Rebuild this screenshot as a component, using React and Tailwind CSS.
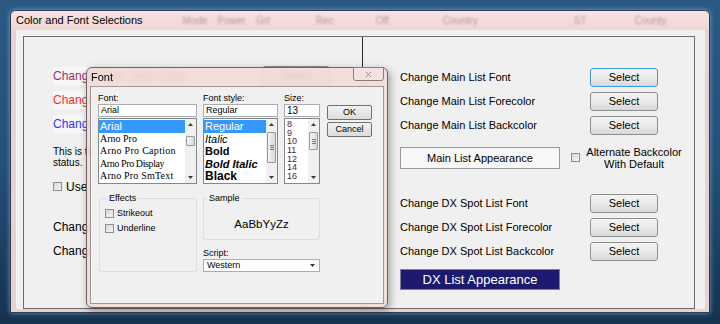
import { X } from 'lucide-react'

function Btn({ children, focus }) {
  return (
    <div
      className={`flex h-[19px] w-[68px] shrink-0 items-center justify-center rounded-[3px] border bg-linear-to-b from-[#f4f4f4] via-[#ebebeb] to-[#d8d8d8] text-[11px] text-black ${
        focus ? 'border-[#3c9ad8]' : 'border-[#8e8f8f]'
      }`}
    >
      {children}
    </div>
  )
}

function Check() {
  return <span className="inline-block h-[9px] w-[9px] shrink-0 border border-[#8f8f8f] bg-linear-to-br from-[#d6d6d6] to-[#f6f6f6]" />
}

function Arrow({ down }) {
  return (
    <svg width="5" height="3" viewBox="0 0 5 3">
      <path d={down ? 'M0 0L2.5 3L5 0z' : 'M0 3L2.5 0L5 3z'} fill="#3a3a3a" />
    </svg>
  )
}

function Scroll({ thumb, grip }) {
  return (
    <div className="flex w-[11px] shrink-0 flex-col bg-[#f0f0f0]">
      <div className="flex h-[11px] items-center justify-center">
        <Arrow />
      </div>
      <div className="flex-1">
        <div className={`mx-[1px] flex flex-col items-center justify-center gap-[1px] rounded-[1px] border border-[#9a9a9a] bg-linear-to-r from-[#f3f3f3] to-[#d9d9d9] ${thumb}`}>
          {grip && (
            <>
              <span className="h-px w-[4px] bg-[#777]" />
              <span className="h-px w-[4px] bg-[#777]" />
              <span className="h-px w-[4px] bg-[#777]" />
            </>
          )}
        </div>
      </div>
      <div className="flex h-[11px] items-center justify-center">
        <Arrow down />
      </div>
    </div>
  )
}

const fonts = [
  { name: 'Arial', cls: "font-['Liberation_Sans',sans-serif] text-[11px]" },
  { name: 'Arno Pro', cls: "font-['Liberation_Serif',serif] text-[10px]" },
  { name: 'Arno Pro Caption', cls: "font-['Liberation_Serif',serif] text-[10px] tracking-[0.3px]" },
  { name: 'Arno Pro Display', cls: "font-['Liberation_Serif',serif] text-[10px] tracking-[-0.4px]" },
  { name: 'Arno Pro SmText', cls: "font-['Liberation_Serif',serif] text-[10px] tracking-[0.2px]" },
]

const styles = [
  { name: 'Regular', cls: 'text-[11px]' },
  { name: 'Italic', cls: 'text-[11px] italic' },
  { name: 'Bold', cls: 'text-[11px] font-bold' },
  { name: 'Bold Italic', cls: 'text-[11px] font-bold italic' },
  { name: 'Black', cls: 'text-[12px] font-bold' },
]

const sizes = ['8', '9', '10', '11', '12', '14', '16']

const leftRows = [
  { label: 'Change Form Sent Color', color: 'text-[#9b2c6c]' },
  { label: 'Change Spot Worked Color', color: 'text-[#ff2626]' },
  { label: 'Change Spot Needed Color', color: 'text-[#3030ff]' },
]

const ghosts = [
  ['Mode', 'ml-[40px]'],
  ['Power', 'ml-[10px]'],
  ['Grt', 'ml-[10px]'],
  ['Rec', 'ml-[46px]'],
  ['Off', 'ml-[42px]'],
  ['Country', 'ml-[54px]'],
  ['ST', 'ml-[96px]'],
  ['County', 'ml-[48px]'],
]

function FontDialog() {
  return (
    <div className="absolute left-[86px] top-[67px] flex h-[241px] w-[302px] flex-col rounded-[6px] border border-[#6f6262] bg-[#f1dad7]/90 shadow-[2px_3px_8px_rgba(0,0,0,0.35)] backdrop-blur-[2px]">
      <div className="relative flex h-[18px] shrink-0 items-center pl-[4px] text-[11px] text-black">
        Font
        <div className="absolute right-[3px] top-[-1px] flex h-[14px] w-[31px] items-center justify-center rounded-b-[3px] border border-[#8c7c7c] bg-[#f4e4e2]/70">
          <X size={9} strokeWidth={2.5} className="text-[#8a8a8a]" />
        </div>
      </div>
      <div className="mx-[3px] mb-[3px] flex-1 border border-[#a59494] bg-[#f0f0f0] pl-[7px] pt-[6px] text-[9px] text-black">
        <div className="flex">
          <div className="flex w-[99px] flex-col">
            <div className="h-[11px] leading-[11px]">Font:</div>
            <div className="h-[13px] border border-[#abadb3] bg-white px-[2px] leading-[11px]">Arial</div>
            <div className="mt-[1px] flex h-[66px] border border-[#828790] bg-white">
              <div className="flex-1 overflow-hidden pt-[1px]">
                {fonts.map((f, i) => (
                  <div
                    key={f.name}
                    className={`h-[12.5px] truncate px-[1px] leading-[12.5px] ${f.cls} ${i === 0 ? 'bg-[#3399ff] text-white' : 'text-black'}`}
                  >
                    {f.name}
                  </div>
                ))}
              </div>
              <Scroll thumb="mt-[6px] h-[10px]" />
            </div>
          </div>
          <div className="ml-[6px] flex w-[75px] flex-col">
            <div className="h-[11px] leading-[11px]">Font style:</div>
            <div className="h-[13px] border border-[#abadb3] bg-white px-[2px] leading-[11px]">Regular</div>
            <div className="mt-[1px] flex h-[66px] border border-[#828790] bg-white">
              <div className="flex-1 overflow-hidden pt-[1px]">
                {styles.map((s, i) => (
                  <div
                    key={s.name}
                    className={`h-[12.5px] truncate px-[1px] leading-[12.5px] ${s.cls} ${i === 0 ? 'bg-[#3399ff] text-white' : 'text-black'}`}
                  >
                    {s.name}
                  </div>
                ))}
              </div>
              <Scroll thumb="mt-[2px] h-[31px]" grip />
            </div>
          </div>
          <div className="ml-[6px] flex w-[36px] flex-col">
            <div className="h-[11px] leading-[11px]">Size:</div>
            <div className="h-[13px] border border-[#abadb3] bg-white px-[2px] text-[10px] leading-[11px]">13</div>
            <div className="mt-[1px] flex h-[66px] border border-[#828790] bg-white">
              <div className="flex-1 overflow-hidden pl-[2px] pt-[1px]">
                {sizes.map((s) => (
                  <div key={s} className="h-[8.7px] text-[9px] leading-[8.7px] text-[#4a1f32]">
                    {s}
                  </div>
                ))}
              </div>
              <Scroll thumb="mt-[2px] h-[18px]" grip />
            </div>
          </div>
          <div className="ml-[7px] mt-[12px] flex w-[45px] flex-col gap-[2px]">
            <div className="flex h-[15px] items-center justify-center rounded-[2px] border border-[#707070] bg-linear-to-b from-[#f2f2f2] to-[#dcdcdc]">OK</div>
            <div className="flex h-[15px] items-center justify-center rounded-[2px] border border-[#707070] bg-linear-to-b from-[#f2f2f2] to-[#dcdcdc]">Cancel</div>
          </div>
        </div>

        <div className="mt-[9px] flex">
          <fieldset className="ml-[1px] h-[79px] w-[98px] rounded-[3px] border border-[#d5dfe5] pl-[5px]">
            <legend className="ml-[2px] px-[2px] leading-[10px]">Effects</legend>
            <div className="mt-[5px] flex h-[11px] items-center gap-[3px] leading-[11px]">
              <Check />
              <span>Strikeout</span>
            </div>
            <div className="mt-[4px] flex h-[11px] items-center gap-[3px] leading-[11px]">
              <Check />
              <span>Underline</span>
            </div>
          </fieldset>
          <div className="ml-[6px] flex w-[117px] flex-col">
            <fieldset className="flex h-[47px] items-center justify-center rounded-[3px] border border-[#d5dfe5] pt-[13px]">
              <legend className="ml-[3px] px-[2px] leading-[10px]">Sample</legend>
              <span className="text-[11.5px]">AaBbYyZz</span>
            </fieldset>
            <div className="mt-[7px] h-[12px] leading-[12px]">Script:</div>
            <div className="flex h-[13px] items-center justify-between border border-[#abadb3] bg-white pl-[3px] pr-[4px]">
              <span className="leading-[11px]">Western</span>
              <Arrow down />
            </div>
          </div>
        </div>
      </div>
    </div>
  )
}

export default function App() {
  return (
    <div className="relative h-[324px] w-[720px] overflow-hidden bg-linear-to-b from-[#2b5983] via-[#245078] to-[#163250] pb-[11px] pl-[10px] pr-[10px] pt-[10px] font-['Liberation_Sans',Arial,sans-serif]">
      <div className="flex h-full flex-col rounded-t-[6px] border border-[#2c3f55] bg-[#e8d2cf] shadow-[0_0_5px_rgba(150,190,230,0.7)]">
        <div className="flex h-[19px] shrink-0 items-center rounded-t-[5px] bg-linear-to-b from-[#f7e3e0] to-[#efd6d2] pl-[5px] text-[11px] text-black">
          <span>Color and Font Selections</span>
          {ghosts.map(([t, m]) => (
            <span key={t} className={`${m} text-[10px] text-[#7d7070] opacity-60 blur-[1.2px]`}>
              {t}
            </span>
          ))}
        </div>
        <div className="flex flex-1 pb-[3px] pl-[5px] pr-[4px]">
          <div className="flex flex-1 bg-[#f0f0f0] pl-[7px] pr-[10px] pt-[6px]">
            <div className="flex flex-1 border border-[#6b6b6b] bg-[#f0f0f0]">
              {/* left column, mostly covered by the font dialog */}
              <div className="flex w-[339px] shrink-0 flex-col border-r border-[#2a2a2a] pl-[29px] pt-[29px]">
                <div className="flex flex-col gap-[5px]">
                  {leftRows.map((r) => (
                    <div key={r.label} className="flex h-[19px] items-center">
                      <span className={`w-[209px] bg-[#f7f7f7] text-[12px] ${r.color}`}>{r.label}</span>
                      <Btn focus={false}>Select</Btn>
                    </div>
                  ))}
                </div>
                <div className="mt-[13px] text-[10px] leading-[11px] text-black">
                  This is the color used to mark spots that need a
                  <br />
                  status.
                </div>
                <div className="mt-[12px] flex h-[13px] items-center gap-[4px] text-[12px] text-black">
                  <Check />
                  <span>Use Color Coding For Status</span>
                </div>
                <div className="mt-[24px] flex flex-col gap-[5px] text-[12px] text-black">
                  <div className="flex h-[19px] items-center">Change Status List Font</div>
                  <div className="flex h-[19px] items-center">Change Status List Color</div>
                </div>
              </div>

              {/* right column */}
              <div className="flex flex-1 flex-col pl-[37px] pt-[31px] text-[11px] text-black">
                <div className="flex flex-col gap-[5px]">
                  <div className="flex h-[19px] items-center">
                    <span className="w-[190px]">Change Main List Font</span>
                    <Btn focus>Select</Btn>
                  </div>
                  <div className="flex h-[19px] items-center">
                    <span className="w-[190px]">Change Main List Forecolor</span>
                    <Btn>Select</Btn>
                  </div>
                  <div className="flex h-[19px] items-center">
                    <span className="w-[190px]">Change Main List Backcolor</span>
                    <Btn>Select</Btn>
                  </div>
                </div>
                <div className="mt-[11px] flex items-center">
                  <div className="flex h-[22px] w-[160px] items-center justify-center border border-[#9a9a9a] bg-[#f7f7f7]">
                    Main List Appearance
                  </div>
                  <div className="ml-[11px]">
                    <Check />
                  </div>
                  <div className="ml-[5px] w-[98px] text-center leading-[12px]">
                    Alternate Backcolor
                    <br />
                    With Default
                  </div>
                </div>
                <div className="mt-[24px] flex flex-col gap-[5px]">
                  <div className="flex h-[19px] items-center">
                    <span className="w-[190px]">Change DX Spot List Font</span>
                    <Btn>Select</Btn>
                  </div>
                  <div className="flex h-[19px] items-center">
                    <span className="w-[190px]">Change DX Spot List Forecolor</span>
                    <Btn>Select</Btn>
                  </div>
                  <div className="flex h-[19px] items-center">
                    <span className="w-[190px]">Change DX Spot List Backcolor</span>
                    <Btn>Select</Btn>
                  </div>
                </div>
                <div className="mt-[8px] flex h-[21px] w-[160px] items-center justify-center border border-[#7d7d9a] bg-[#1b1a6e] text-[13px] text-white">
                  DX List Appearance
                </div>
              </div>
            </div>
          </div>
        </div>
      </div>
      <FontDialog />
    </div>
  )
}
